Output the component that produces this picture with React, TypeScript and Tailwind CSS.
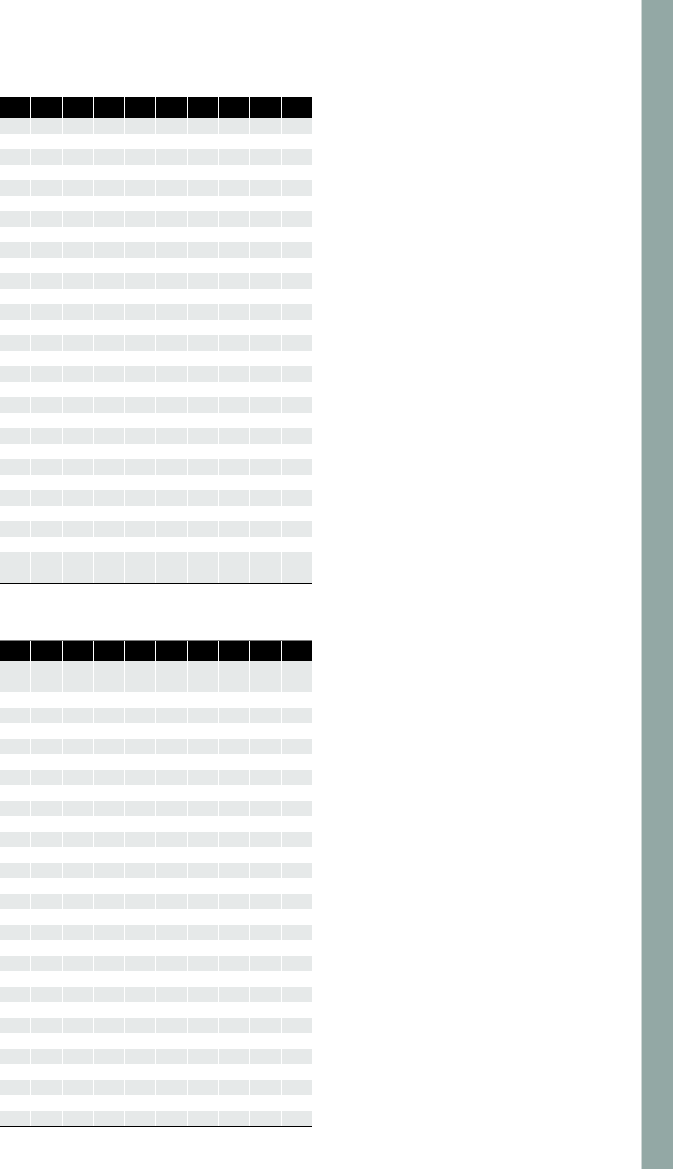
import React from "react";

const cols = Array.from({ length: 10 }, (_, i) => i);

function Row({ grey, tall, header }: { grey?: boolean; tall?: boolean; header?: boolean }) {
  const h = header ? "h-[20px]" : tall ? "h-[31px]" : "h-[15.5px]";
  const bg = header ? "bg-black" : grey ? "bg-[#e6e9e9]" : "bg-white";
  return (
    <div className={`grid grid-cols-10 gap-px bg-white ${h}`}>
      {cols.map((c) => (
        <div key={c} className={`${bg}`} />
      ))}
    </div>
  );
}

function DataTable({ tallFirst }: { tallFirst: boolean }) {
  const rows = Array.from({ length: 29 }, (_, i) => i);
  return (
    <div className="w-[312px] flex flex-col">
      {rows.map((i) => (
        <Row
          key={i}
          grey={i % 2 === 0}
          tall={tallFirst ? i === 0 : i === 28}
        />
      ))}
    </div>
  );
}

export default function App() {
  return (
    <div className="flex min-h-screen bg-white font-['Liberation_Sans',sans-serif]">
      <main className="flex-1 pt-[97px]">
        <section className="w-[312px]">
          <div className="h-[21px] grid grid-cols-10 gap-px bg-white">
            {cols.map((c) => (
              <div key={c} className="bg-black" />
            ))}
          </div>
          <DataTable tallFirst={false} />
          <div className="h-px bg-black" />
        </section>
        <section className="w-[312px] mt-[56px]">
          <div className="h-px bg-[#7d7d7d]" />
          <Row header />
          <DataTable tallFirst={true} />
          <div className="h-px bg-black" />
        </section>
      </main>
      <aside className="w-[32px] shrink-0 bg-[#93a8a5] border-l border-[#cdd6d5]" />
    </div>
  );
}
